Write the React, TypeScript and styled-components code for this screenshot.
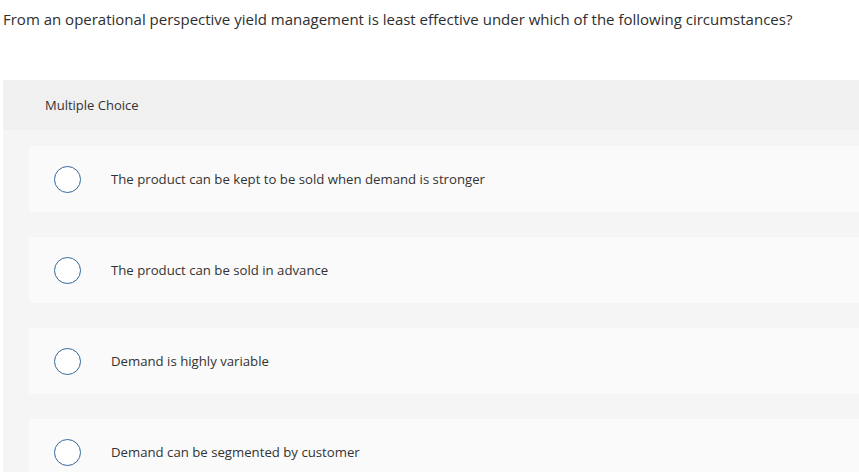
import React from "react";
import styled, { createGlobalStyle } from "styled-components";

const Global = createGlobalStyle`
  html, body { margin: 0; padding: 0; background: #ffffff; }
  body { font-family: "Open Sans", "Liberation Sans", sans-serif; color: #333333; overflow: hidden; }
`;

const Page = styled.div`
  width: 859px;
  height: 472px;
  overflow: hidden;
  padding-left: 3px;
  box-sizing: border-box;
`;

const Question = styled.p`
  margin: 0;
  padding-top: 9px;
  height: 80px;
  box-sizing: border-box;
  font-size: 15px;
  line-height: 20px;
  color: #2e2e2e;
  white-space: nowrap;
`;

const Panel = styled.section`
  width: 870px;
  background: #f5f5f5;
`;

const PanelHeader = styled.div`
  height: 50px;
  background: #f0f0f0;
  display: flex;
  align-items: center;
  padding-left: 42px;
  font-size: 13px;
  color: #333333;
`;

const Options = styled.div`
  display: flex;
  flex-direction: column;
  gap: 25px;
  padding: 16px 0 0 26px;
`;

const Option = styled.label`
  height: 66px;
  background: #fafafa;
  border-radius: 3px;
  display: flex;
  align-items: center;
  padding-left: 25px;
  gap: 30px;
  font-size: 13.2px;
  color: #333333;
  cursor: pointer;
`;

const Radio = styled.span`
  width: 25px;
  height: 25px;
  border: 1.5px solid #33679c;
  border-radius: 50%;
  background: #ffffff;
  flex: none;
`;

const choices = [
  "The product can be kept to be sold when demand is stronger",
  "The product can be sold in advance",
  "Demand is highly variable",
  "Demand can be segmented by customer",
];

export default function App() {
  return (
    <>
      <Global />
      <Page>
        <Question>
          From an operational perspective yield management is least effective under which of the following circumstances?
        </Question>
        <Panel>
          <PanelHeader>Multiple Choice</PanelHeader>
          <Options>
            {choices.map((c) => (
              <Option key={c}>
                <Radio />
                <span>{c}</span>
              </Option>
            ))}
          </Options>
        </Panel>
      </Page>
    </>
  );
}
